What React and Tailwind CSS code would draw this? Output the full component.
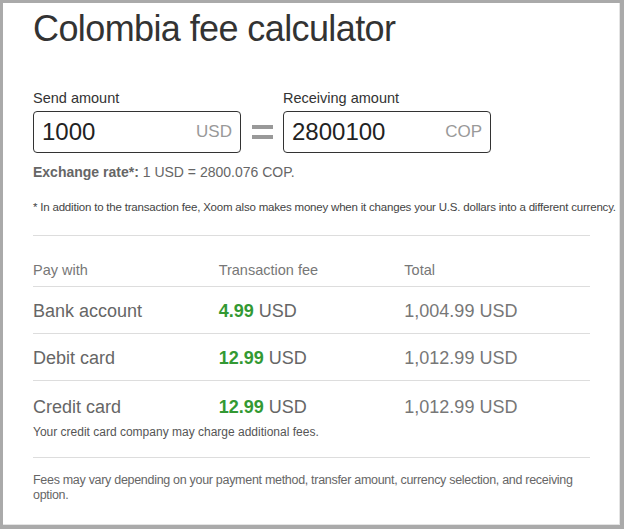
import React from "react";

const rows = [
  { method: "Bank account", fee: "4.99", total: "1,004.99 USD" },
  { method: "Debit card", fee: "12.99", total: "1,012.99 USD" },
];

const AmountBox = ({ label, value, currency }) => (
  <div className="flex flex-col w-[208px]">
    <label className="text-[14.5px] leading-[20px] text-[#333]">{label}</label>
    <div className="mt-[3px] h-[42px] border border-[#333] rounded-[4px] flex items-center justify-between pl-[8px] pr-[8px]">
      <span className="text-[24px] text-[#222] leading-none">{value}</span>
      <span className="text-[17px] text-[#999] leading-none">{currency}</span>
    </div>
  </div>
);

const FeeRow = ({ method, fee, total }) => (
  <div className="grid grid-cols-3 h-[47px] items-center pt-[3px] border-b border-[#ddd]">
    <span className="text-[18px] leading-[24px] text-[#666]">{method}</span>
    <span className="text-[18px] leading-[24px] text-[#666]">
      <b className="font-bold text-[#339933]">{fee}</b> USD
    </span>
    <span className="text-[18px] leading-[24px] text-[#777]">{total}</span>
  </div>
);

export default function App() {
  return (
    <div className="w-[624px] h-[529px] bg-[#aaa] pt-[3px] pl-[3px] pr-[4px] pb-[4px] font-['Liberation_Sans',Arial,sans-serif]">
      <div className="h-full bg-white overflow-hidden border-r border-b border-[#e4e4e4] pl-[30px] pt-[4.5px]">
        <h1 className="text-[36px] leading-[42px] tracking-[-0.6px] text-[#333] font-normal">
          Colombia fee calculator
        </h1>

        <div className="mt-[38px] flex items-end">
          <AmountBox label="Send amount" value="1000" currency="USD" />
          <div className="w-[42px] h-[42px] flex flex-col items-center justify-center gap-[6px]">
            <div className="w-[21px] h-[4px] bg-[#999]" />
            <div className="w-[21px] h-[4px] bg-[#999]" />
          </div>
          <AmountBox label="Receiving amount" value="2800100" currency="COP" />
        </div>

        <p className="mt-[9px] text-[14px] leading-[20px] text-[#666]">
          <b className="font-bold">Exchange rate*:</b> 1 USD = 2800.076 COP.
        </p>
        <p className="mt-[17px] text-[11.5px] leading-[16px] tracking-[-0.2px] text-[#444] whitespace-nowrap">
          * In addition to the transaction fee, Xoom also makes money when it changes your U.S. dollars into a different currency.
        </p>

        <div className="w-[557px] mt-[20px] border-t border-[#ddd]">
          <div className="grid grid-cols-3 pt-[24px] pb-[6px] border-b border-[#ddd] text-[14.5px] leading-[20px] text-[#777]">
            <span>Pay with</span>
            <span>Transaction fee</span>
            <span>Total</span>
          </div>
          {rows.map((r) => (
            <FeeRow key={r.method} {...r} />
          ))}
          <div className="pt-[14px]">
            <div className="grid grid-cols-3">
              <span className="text-[18px] leading-[24px] text-[#666]">Credit card</span>
              <span className="text-[18px] leading-[24px] text-[#666]">
                <b className="font-bold text-[#339933]">12.99</b> USD
              </span>
              <span className="text-[18px] leading-[24px] text-[#777]">1,012.99 USD</span>
            </div>
            <p className="mt-[5px] text-[12px] leading-[16px] text-[#555]">
              Your credit card company may charge additional fees.
            </p>
          </div>
          <div className="mt-[17px] border-t border-[#ddd] pt-[15px]">
            <p className="text-[12.5px] leading-[15px] tracking-[-0.3px] text-[#666]">
              Fees may vary depending on your payment method, transfer amount, currency selection, and receiving option.
            </p>
          </div>
        </div>
      </div>
    </div>
  );
}
